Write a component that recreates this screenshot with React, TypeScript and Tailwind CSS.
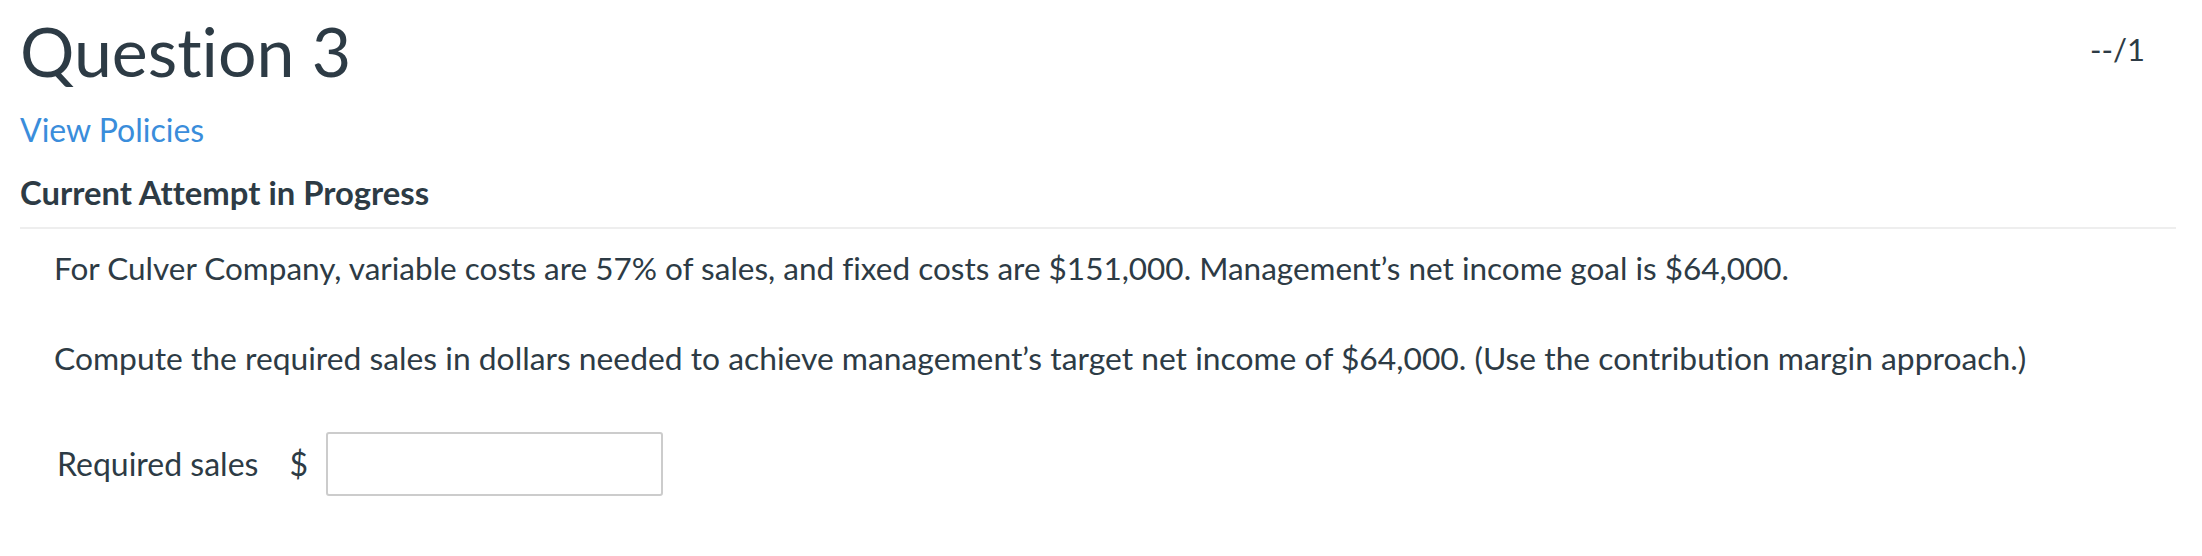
export default function App() {
  return (
    <div className="min-h-[556px] w-full bg-white text-[#2d3b45] font-['Lato','Liberation_Sans',sans-serif] [font-variant-ligatures:no-common-ligatures]">
      <div className="pl-[20px] pr-[26px]">
        <div className="flex items-start justify-between pt-[10px]">
          <h1 className="text-[68px] font-normal leading-[1.2]">Question 3</h1>
          <div className="mt-[21px] mr-[31px] text-[31px] leading-[1.2]">--/1</div>
        </div>
        <a href="#" className="mt-[19px] block w-fit text-[32px] leading-[1.2] text-[#3a8ddb]">
          View Policies
        </a>
        <h2 className="mt-[24px] text-[32.8px] font-bold leading-[1.2]">Current Attempt in Progress</h2>
        <div className="mt-[15px] h-[2px] bg-[#eeeeee]" />
        <div className="pl-[34px]">
          <p className="mt-[21px] text-[31.5px] leading-[1.2]">
            For Culver Company, variable costs are 57% of sales, and fixed costs are $151,000. Management’s net income
            goal is $64,000.
          </p>
          <p className="mt-[51px] text-[31.8px] leading-[1.2]">
            Compute the required sales in dollars needed to achieve management’s target net income of $64,000. (Use the
            contribution margin approach.)
          </p>
          <div className="mt-[55px] flex items-center pl-[3px]">
            <span className="text-[32px] leading-[1.2]">Required sales</span>
            <span className="ml-[31px] text-[32px] leading-[1.2]">$</span>
            <input
              type="text"
              className="ml-[18px] h-[64px] w-[337px] rounded-[3px] border-2 border-[#cccccc] bg-white px-3 text-[32px] outline-none"
            />
          </div>
        </div>
      </div>
    </div>
  );
}
